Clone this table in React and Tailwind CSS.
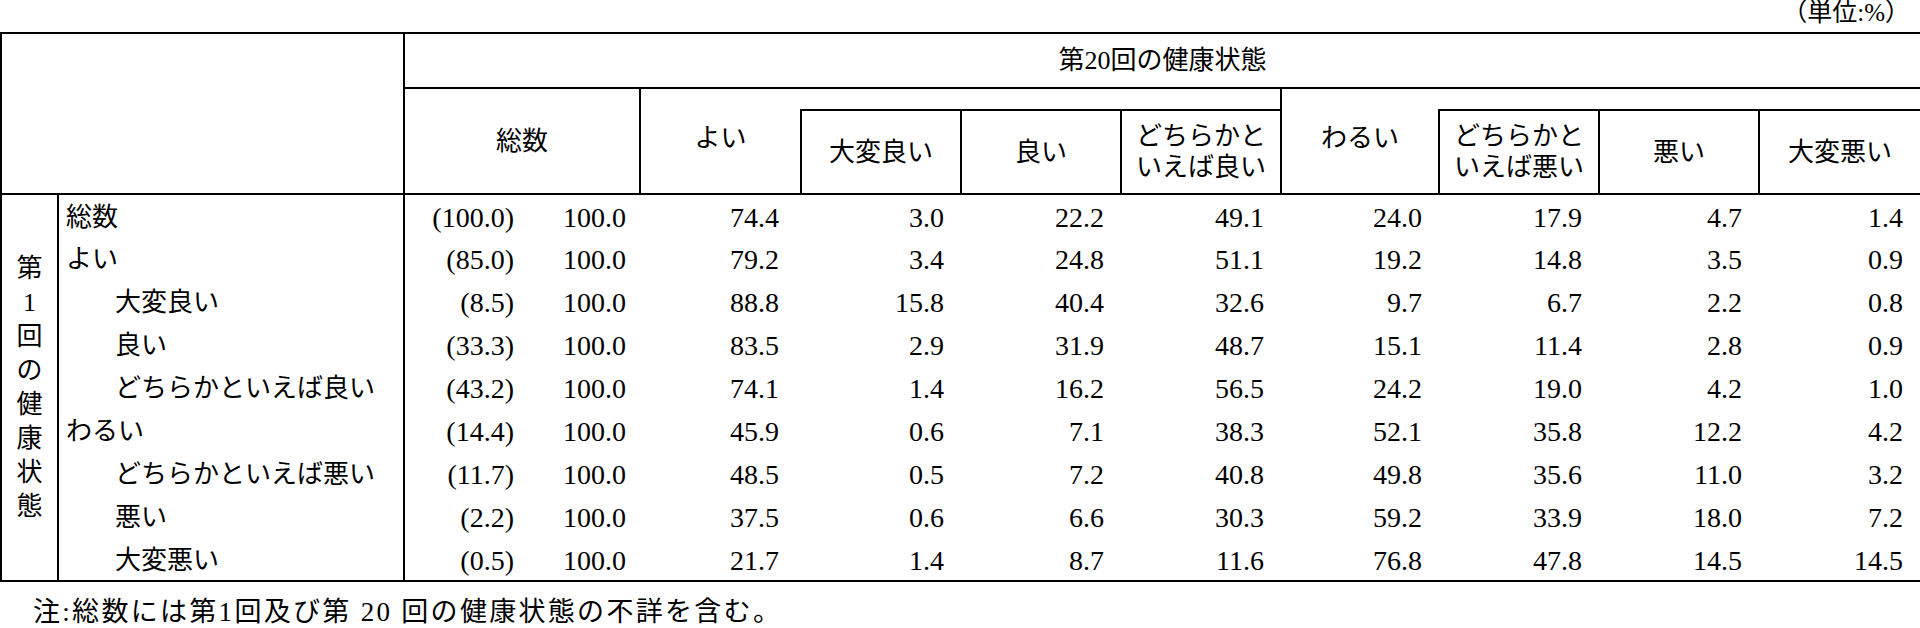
const rows = [
  { label: '総数', lvl: 0, p: '(100.0)', v: ['74.4', '3.0', '22.2', '49.1', '24.0', '17.9', '4.7', '1.4'] },
  { label: 'よい', lvl: 0, p: '(85.0)', v: ['79.2', '3.4', '24.8', '51.1', '19.2', '14.8', '3.5', '0.9'] },
  { label: '大変良い', lvl: 1, p: '(8.5)', v: ['88.8', '15.8', '40.4', '32.6', '9.7', '6.7', '2.2', '0.8'] },
  { label: '良い', lvl: 1, p: '(33.3)', v: ['83.5', '2.9', '31.9', '48.7', '15.1', '11.4', '2.8', '0.9'] },
  { label: 'どちらかといえば良い', lvl: 1, p: '(43.2)', v: ['74.1', '1.4', '16.2', '56.5', '24.2', '19.0', '4.2', '1.0'] },
  { label: 'わるい', lvl: 0, p: '(14.4)', v: ['45.9', '0.6', '7.1', '38.3', '52.1', '35.8', '12.2', '4.2'] },
  { label: 'どちらかといえば悪い', lvl: 1, p: '(11.7)', v: ['48.5', '0.5', '7.2', '40.8', '49.8', '35.6', '11.0', '3.2'] },
  { label: '悪い', lvl: 1, p: '(2.2)', v: ['37.5', '0.6', '6.6', '30.3', '59.2', '33.9', '18.0', '7.2'] },
  { label: '大変悪い', lvl: 1, p: '(0.5)', v: ['21.7', '1.4', '8.7', '11.6', '76.8', '47.8', '14.5', '14.5'] },
];

const vlabel = ['第', '1', '回', 'の', '健', '康', '状', '態'];

export default function App() {
  return (
    <div className="w-[1920px] h-[628px] bg-white text-black overflow-hidden [font-family:'Liberation_Serif','Noto_Sans_CJK_JP',serif]">
      <div className="h-[32px] flex justify-end items-start pr-[10px] text-[25px] leading-[25px]">
        <span>（単位:%）</span>
      </div>
      <table className="table-fixed border-collapse w-[1920px] border-2 border-black text-[26px]">
        <colgroup>
          <col className="w-[57px]" />
          <col className="w-[346px]" />
          <col className="w-[124px]" />
          <col className="w-[112px]" />
          <col className="w-[161px]" />
          <col className="w-[160px]" />
          <col className="w-[160px]" />
          <col className="w-[160px]" />
          <col className="w-[158px]" />
          <col className="w-[160px]" />
          <col className="w-[160px]" />
          <col className="w-[162px]" />
        </colgroup>
        <thead>
          <tr className="h-[55px]">
            <th rowSpan={3} colSpan={2} className="border-2 border-black p-0"></th>
            <th colSpan={10} className="border-2 border-black p-0 font-normal text-center leading-none">
              第20回の健康状態
            </th>
          </tr>
          <tr className="h-[22px]">
            <th rowSpan={2} colSpan={2} className="border-2 border-black p-0 font-normal text-center">総数</th>
            <th rowSpan={2} className="border-l-2 border-t-2 border-b-2 border-black p-0 pb-[6px] font-normal text-center">よい</th>
            <th colSpan={3} className="border-t-2 border-b-2 border-r-2 border-black p-0"></th>
            <th rowSpan={2} className="border-l-2 border-t-2 border-b-2 border-black p-0 pb-[6px] font-normal text-center">わるい</th>
            <th colSpan={3} className="border-t-2 border-b-2 border-r-2 border-black p-0"></th>
          </tr>
          <tr className="h-[84px]">
            <th className="border-2 border-black p-0 font-normal text-center">大変良い</th>
            <th className="border-2 border-black p-0 font-normal text-center">良い</th>
            <th className="border-2 border-black p-0 font-normal text-center leading-[31px]">
              どちらかと<br />いえば良い
            </th>
            <th className="border-2 border-black p-0 font-normal text-center leading-[31px]">
              どちらかと<br />いえば悪い
            </th>
            <th className="border-2 border-black p-0 font-normal text-center">悪い</th>
            <th className="border-2 border-black p-0 font-normal text-center">大変悪い</th>
          </tr>
        </thead>
        <tbody>
          {rows.map((r, i) => (
            <tr key={i} className="h-[43px]">
              {i === 0 && (
                <td rowSpan={9} className="border-2 border-black p-0 text-center align-middle">
                  <div className="flex flex-col items-center leading-[34px]">
                    {vlabel.map((c, j) => (
                      <span key={j}>{c}</span>
                    ))}
                  </div>
                </td>
              )}
              <td className={`border-r-2 border-black p-0 pt-[3px] leading-none whitespace-nowrap ${r.lvl === 0 ? 'pl-[7px]' : 'pl-[56px]'}`}>
                {r.label}
              </td>
              <td className="p-0 pt-[3px] pr-[14px] text-right text-[28px] leading-none">{r.p}</td>
              <td className="p-0 pt-[3px] pr-[14px] text-right text-[28px] leading-none">100.0</td>
              {r.v.map((x, k) => (
                <td
                  key={k}
                  className={`p-0 pt-[3px] text-right text-[28px] leading-none ${k === 0 ? 'pr-[22px]' : 'pr-[17px]'}`}
                >
                  {x}
                </td>
              ))}
            </tr>
          ))}
        </tbody>
      </table>
      <div className="pl-[33px] mt-[16px] text-[27px] leading-[28px] tracking-[2.3px] whitespace-nowrap">
        注:総数には第1回及び第 20 回の健康状態の不詳を含む。
      </div>
    </div>
  );
}
